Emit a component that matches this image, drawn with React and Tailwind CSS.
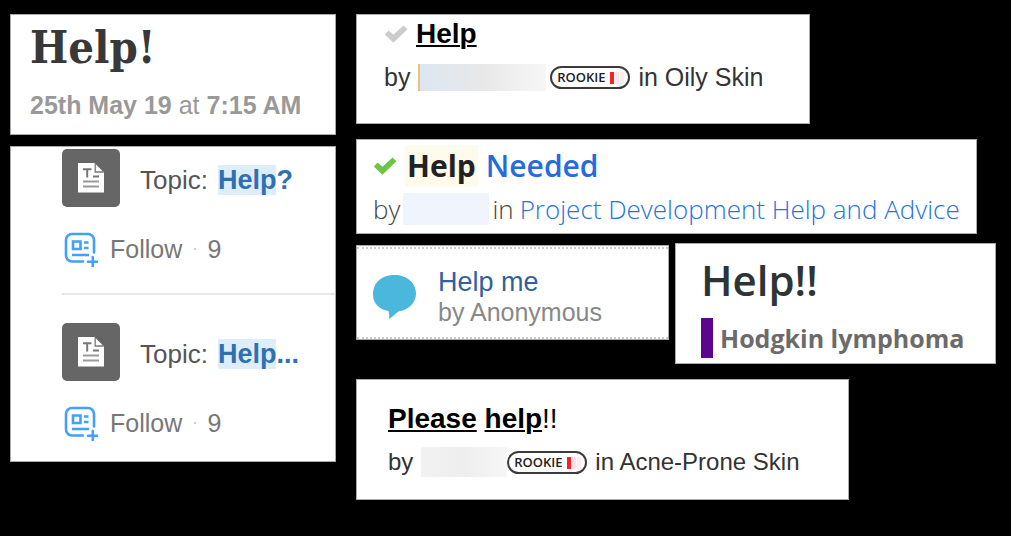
import React from "react";

const topics = [
  { id: 1, match: "Help", rest: "?", followers: 9 },
  { id: 2, match: "Help", rest: "...", followers: 9 },
];

function CheckIcon({ className }) {
  return (
    <svg className={className} viewBox="0 0 24 18" fill="currentColor" aria-hidden="true">
      <path d="M0.8 9.6 4.600 5.600 9.400 9.800 19.500 0.500 23.500 4.200 9.400 17.800z" />
    </svg>
  );
}

function ArticleIcon() {
  return (
    <svg className="h-[30px] w-[26px]" viewBox="0 0 26 30" aria-hidden="true">
      <path d="M0 0h16.500L26 9.500V29.500H0z" fill="#fff" />
      <path d="M17.200 0.500V9h8.300" fill="none" stroke="#777" strokeWidth="1.300" />
      <path d="M5 6.200h8.500M9.200 6v8.500M15 13.500h6" fill="none" stroke="#777" strokeWidth="2" />
      <path d="M5 18.500h16M5 23.500h16" stroke="#999" strokeWidth="1.800" />
    </svg>
  );
}

function FollowIcon() {
  return (
    <svg
      className="h-9 w-9 shrink-0"
      viewBox="0 0 36 36"
      fill="none"
      stroke="#42a1fb"
      strokeWidth="2.600"
      aria-hidden="true"
    >
      <path d="M21 30.500H10a6 6 0 0 1-6-6V9a6 6 0 0 1 6-6h16a6 6 0 0 1 6 6v12.500" strokeLinecap="round" />
      <path d="M11 10.500h7.500v7.500H11z" />
      <path d="M22 11.500h4.500M22 17h4.500M10 24h17" />
      <path d="M26 30.700h9.500M30.800 26v9.500" strokeLinecap="round" />
    </svg>
  );
}

function RookieBadge() {
  return (
    <span className="mt-px flex h-[23px] w-20 shrink-0 items-center justify-center gap-1 rounded-full border-2 border-[#3b3b3b] font-['Open_Sans',sans-serif] text-[13px] font-semibold leading-none text-[#222]">
      ROOKIE
      <span className="flex gap-px" aria-hidden="true">
        <span className="h-3 w-1 bg-[#f5222d]" />
        <span className="h-3 w-1 bg-[#ffe3e3]" />
        <span className="h-3 w-1 bg-[#ffeded]" />
      </span>
    </span>
  );
}

function TopicItem({ topic }) {
  return (
    <li className="border-b-2 border-[#e6e6e6] pb-[26px] last:border-b-0 last:pb-5">
      <div className="flex items-center gap-5">
        <span className="flex size-[58px] shrink-0 items-center justify-center rounded-[5px] bg-[#666]">
          <ArticleIcon />
        </span>
        <h2 className="flex items-baseline gap-[10px] whitespace-nowrap pt-[3px] text-[26px] leading-[30px] text-[#555]">
          Topic:
          <a href="#topic" className="text-[27px] font-bold text-[#2f70b3]">
            <mark className="bg-[#deeef9] text-inherit">{topic.match}</mark>
            {topic.rest}
          </a>
        </h2>
      </div>
      <div className="mt-6 flex items-center gap-[10px] text-[25px] leading-9 text-[#777]">
        <button type="button" className="flex items-center gap-3">
          <FollowIcon />
          Follow
        </button>
        <span className="text-base text-[#bbb]">·</span>
        <span>{topic.followers}</span>
      </div>
    </li>
  );
}

export default function App() {
  return (
    <div className="min-h-screen bg-black pb-9 pl-[10px] pr-[15px] pt-[14px] font-['Liberation_Sans',Arial,sans-serif]">
      <main className="grid grid-cols-[326fr_640fr] items-start gap-5">
        <div className="flex flex-col gap-[11px]">
          <article className="border border-[#aaa] bg-white pb-[14px] pl-[19px] pt-[3px]">
            <h1 className="font-['DejaVu_Serif_Condensed','DejaVu_Serif',serif] text-[45px] font-bold leading-[60px] text-[#383838]">
              Help!
            </h1>
            <p className="mt-3 whitespace-nowrap text-[25px] leading-[30px] text-[#999]">
              <strong>25th May 19</strong> at <strong>7:15 AM</strong>
            </p>
          </article>

          <ul className="flex flex-col gap-7 border border-[#aaa] bg-white pl-[51px] pt-[2px]">
            {topics.map((topic) => (
              <TopicItem key={topic.id} topic={topic} />
            ))}
          </ul>
        </div>

        <div className="flex flex-col">
          <article className="w-[71%] whitespace-nowrap border border-[#aaa] bg-white pb-[31px] pl-[27px] pt-[3px]">
            <div className="flex items-center gap-2">
              <CheckIcon className="h-[18px] w-6 text-[#ccc]" />
              <a href="#help" className="text-[28px] font-bold leading-8 text-black underline decoration-2 underline-offset-2">
                Help
              </a>
            </div>
            <div className="mt-3 flex items-center text-[25px] leading-[30px] text-[#333]">
              by
              <span className="ml-2 mr-1 h-[27px] w-[128px] border-l-2 border-[#f0c080] bg-linear-to-r from-[#dce7f1] via-[#e8e8e8] to-[#f6f6f6]" />
              <RookieBadge />
              <span className="ml-2">in Oily Skin</span>
            </div>
          </article>

          <article className="mt-[15px] w-[97%] whitespace-nowrap border border-[#aaa] bg-white pb-[6px] pl-4 pt-[5px] font-['Open_Sans','Noto_Sans',sans-serif]">
            <h2 className="flex items-center text-[30px] leading-[42px]">
              <CheckIcon className="mr-2 h-[18px] w-6 text-[#6cc644]" />
              <mark className="bg-[#fffbec] px-[2px] font-bold text-[#222]">Help</mark>
              <a href="#needed" className="ml-2 font-semibold text-[#256bdb]">
                Needed
              </a>
            </h2>
            <div className="mt-1 flex items-center text-[26px] font-light leading-9 text-[#444]">
              by
              <span className="mx-[3px] h-8 w-[86px] bg-[#f0f4fc]" />
              in
              <a href="#project" className="ml-[6px] text-[#2673dc]">
                Project Development Help and Advice
              </a>
            </div>
          </article>

          <div className="mt-[9px] grid grid-cols-[313fr_321fr] items-start gap-[6px] whitespace-nowrap">
            <article className="mt-[2px] border border-[#aaa] bg-white pt-px">
              <div className="flex items-center gap-[22px] border-y-2 border-dotted border-[#ccc] pb-[10px] pl-4 pt-[18px]">
                <svg className="h-11 w-[43px] shrink-0" viewBox="0 0 43 44" fill="#4cb7dc" aria-hidden="true">
                  <path d="M0 20C0 7 9 0 21.500 0S43 8 43 18.500C43 28 35 35.500 25.500 36.500 22 38.500 20 42 15.800 44c.700-2.500.600-4.500-.300-8C7 34.500 0 29 0 20z" />
                </svg>
                <div className="leading-[30px]">
                  <a href="#me" className="block text-[27px] text-[#315f9f]">
                    Help me
                  </a>
                  <p className="text-[25px] text-[#888]">by Anonymous</p>
                </div>
              </div>
            </article>

            <article className="border border-[#aaa] bg-white pb-[5px] pl-[25px] pt-[10px] font-['Open_Sans',sans-serif]">
              <h2 className="text-[42px] font-semibold leading-[52px] text-[#2d3436]">Help!!</h2>
              <p className="mt-3 border-l-12 border-[#5b068c] pl-[7px] text-[25px] font-bold leading-10 text-[#6b6b6b]">
                Hodgkin lymphoma
              </p>
            </article>
          </div>

          <article className="mt-[15px] w-[77%] whitespace-nowrap border border-[#aaa] bg-white pb-[22px] pl-[31px] pt-[23px]">
            <a href="#please" className="block text-[28px] leading-8 text-black">
              <strong className="underline decoration-2 underline-offset-2">Please</strong>{" "}
              <strong className="underline decoration-2 underline-offset-2">help</strong>!!
            </a>
            <div className="mt-3 flex items-center text-[24px] leading-[30px] text-[#333]">
              by
              <span className="ml-2 h-[30px] w-[86px] bg-linear-to-r from-[#f2f2f2] via-[#eee] to-[#f6f6f6]" />
              <RookieBadge />
              <span className="ml-2">in Acne-Prone Skin</span>
            </div>
          </article>
        </div>
      </main>
    </div>
  );
}
